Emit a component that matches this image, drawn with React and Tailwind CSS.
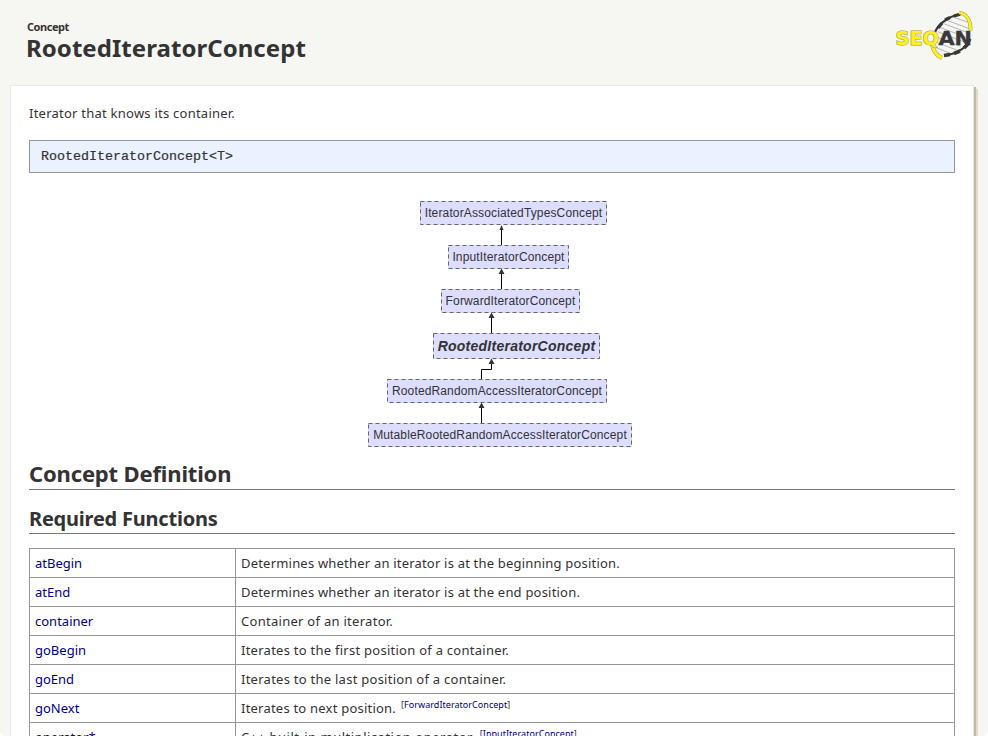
const rows = [
  { name: 'atBegin', text: 'Determines whether an iterator is at the beginning position.' },
  { name: 'atEnd', text: 'Determines whether an iterator is at the end position.' },
  { name: 'container', text: 'Container of an iterator.', spacing: 'tracking-[0.28px]' },
  { name: 'goBegin', text: 'Iterates to the first position of a container.', spacing: 'tracking-[0.26px]' },
  { name: 'goEnd', text: 'Iterates to the last position of a container.', spacing: 'tracking-[0.26px]' },
  { name: 'goNext', text: 'Iterates to next position.', from: 'ForwardIteratorConcept', spacing: 'tracking-[0.22px]' },
  { name: 'operator*', text: 'C++ built-in multiplication operator.', from: 'InputIteratorConcept', spacing: 'tracking-[0.51px]' },
];

const node =
  'absolute flex items-center justify-center whitespace-nowrap bg-[#ddddff]';

const nodes = [
  { label: 'IteratorAssociatedTypesConcept', x: 391, y: 28, w: 187, h: 24 },
  { label: 'InputIteratorConcept', x: 419, y: 72, w: 121, h: 24 },
  { label: 'ForwardIteratorConcept', x: 412, y: 116, w: 139, h: 24 },
  { label: 'RootedIteratorConcept', x: 404, y: 160, w: 167, h: 26, current: true },
  { label: 'RootedRandomAccessIteratorConcept', x: 358, y: 206, w: 220, h: 24 },
  { label: 'MutableRootedRandomAccessIteratorConcept', x: 339, y: 250, w: 264, h: 24 },
];

function Logo() {
  return (
    <svg className="h-[52px] w-[80px]" viewBox="0 0 80 52">
      <defs>
        <clipPath id="helix">
          <path d="M38 36C38 22 50 9 65 6Q76 8 74 19C73 32 62 43 49 46Q39 45 38 36Z" />
        </clipPath>
      </defs>
      <g clipPath="url(#helix)" stroke="#b4b4b4" strokeWidth="1" fill="none">
        <path d="M54 7L80 16M50 11L80 22M46 14L78 26M43 18L75 30M40 22L71 34M38 27L69 39M37 32L66 43M36 37L61 47" />
      </g>
      <path d="M38 26C40 18 49 8 65 5" fill="none" stroke="#383838" strokeWidth="2.2" />
      <path d="M42 19L46 14M49 11L54 8.500M58 7L64 5.200" fill="none" stroke="#383838" strokeWidth="3.2" />
      <path d="M74.500 30C71 38 62 45 48 46.500" fill="none" stroke="#383838" strokeWidth="2.2" />
      <path d="M73 34L68 39M64 42L58 44.500M54 45.500L48 46.500" fill="none" stroke="#383838" strokeWidth="3.6" />
      <path d="M63 3.500Q75 6 74.500 21.500" fill="none" stroke="#99994a" strokeWidth="3.8" />
      <path d="M63 3.500Q75 6 74.500 21.500" fill="none" stroke="#ffee22" strokeWidth="2.8" />
      <path d="M36 34Q37 45 46 49" fill="none" stroke="#99994a" strokeWidth="4" />
      <path d="M36 34Q37 45 46 49" fill="none" stroke="#ffee22" strokeWidth="3" />
      <g fontFamily="'DejaVu Sans', sans-serif" fontWeight="bold" fontSize="19.2">
        <text x="-0.5" y="36" fill="#ffee22" stroke="#99994a" strokeWidth="1.1" paintOrder="stroke" textLength="43.5" lengthAdjust="spacingAndGlyphs">SEQ</text>
        <text x="42.500" y="36" fill="#383838" stroke="#383838" strokeWidth="0.4" textLength="33.5" lengthAdjust="spacingAndGlyphs">AN</text>
      </g>
    </svg>
  );
}

function Hierarchy() {
  return (
    <div className="relative h-[286px] font-['Liberation_Sans',Arial,sans-serif] text-xs tracking-[0.14px] text-[#333333]">
      {nodes.map((n) => (
        <div
          key={n.label}
          className={n.current ? `${node} text-sm font-bold italic tracking-[0.25px]` : node}
          style={{ left: n.x, top: n.y, width: n.w, height: n.h }}
        >
          <svg className="absolute inset-0 size-full" fill="none">
            <rect x="0.5" y="0.5" width={n.w - 1} height={n.h - 1} stroke="#666666" strokeDasharray="4 3" />
          </svg>
          <span className="relative">{n.label}</span>
        </div>
      ))}
      <svg className="absolute inset-0" width="926" height="286" fill="none" stroke="#000000">
        <path d="M472.5 54V72M472.5 97V116M462.5 141V160M452.5 206V196.5H462.5V187M452.5 231V250" />
        <g fill="#333333" stroke="none">
          <path d="M472.5 52L474.5 57H470.5ZM472.5 95.500L475.500 101H469.500ZM462.500 139.500L465.500 145H459.500ZM462.500 185.500L465.500 191H459.500ZM452.500 229.500L455.500 235H449.500Z" />
        </g>
      </svg>
    </div>
  );
}

export default function App() {
  return (
    <div className="h-[736px] w-[988px] overflow-hidden rounded-b-md bg-[#f6f6f2] font-['Noto_Sans',sans-serif] text-[#333333]">
      <header className="flex h-[85px] items-start justify-between pl-[26px] pr-[12px]">
        <h1 className="pt-[20px] font-bold">
          <span className="block pl-px text-[11px] leading-[14px] tracking-[-0.45px]">Concept</span>
          <span className="block text-[24px] leading-[27px] tracking-[0.05px]">RootedIteratorConcept</span>
        </h1>
        <div className="pt-[9px]">
          <Logo />
        </div>
      </header>
      <div className="flex">
        <main className="ml-[10px] h-[700px] w-[964px] border border-[#e9e9e5] bg-white px-[18px] text-[13px]">
          <p className="pt-[17px] leading-[20px] tracking-[0.24px]">Iterator that knows its container.</p>
          <pre className="mt-[17px] h-[33px] border border-[#969699] bg-[#ebf2ff] pl-[11px] font-['Liberation_Mono',monospace] text-[13.330px] leading-[31px] [-webkit-text-stroke:0.2px_#333333]">
            {'RootedIteratorConcept<T>'}
          </pre>
          <Hierarchy />
          <h2 className="h-[31px] border-b border-[#777777] text-[22px] font-bold leading-[28px] tracking-[-0.16px]">Concept Definition</h2>
          <h3 className="mt-[14px] h-[30px] border-b border-[#777777] text-[20px] font-bold leading-[30px] tracking-[-0.22px]">Required Functions</h3>
          <div className="mt-[14px] border border-b-0 border-[#969696]">
            {rows.map((r) => (
              <div key={r.name} className="flex h-[29px] border-b border-[#969696] leading-[28px]">
                <a className="w-[206px] border-r border-[#969696] pl-[5px] text-[#000088]">{r.name}</a>
                <div className={`flex pl-[5px] ${r.spacing || 'tracking-[0.2px]'}`}>
                  {r.text}
                  {r.from && (
                    <span className="ml-[5px] text-[9px] leading-[21px] tracking-[0.04px]">
                      [<a className="text-[#000088]">{r.from}</a>]
                    </span>
                  )}
                </div>
              </div>
            ))}
          </div>
        </main>
        <div className="mt-[2px] w-[2px] bg-[#c3baa5]" />
        <div className="mt-[4px] w-[2px] bg-[#e0dacb]" />
      </div>
    </div>
  );
}
